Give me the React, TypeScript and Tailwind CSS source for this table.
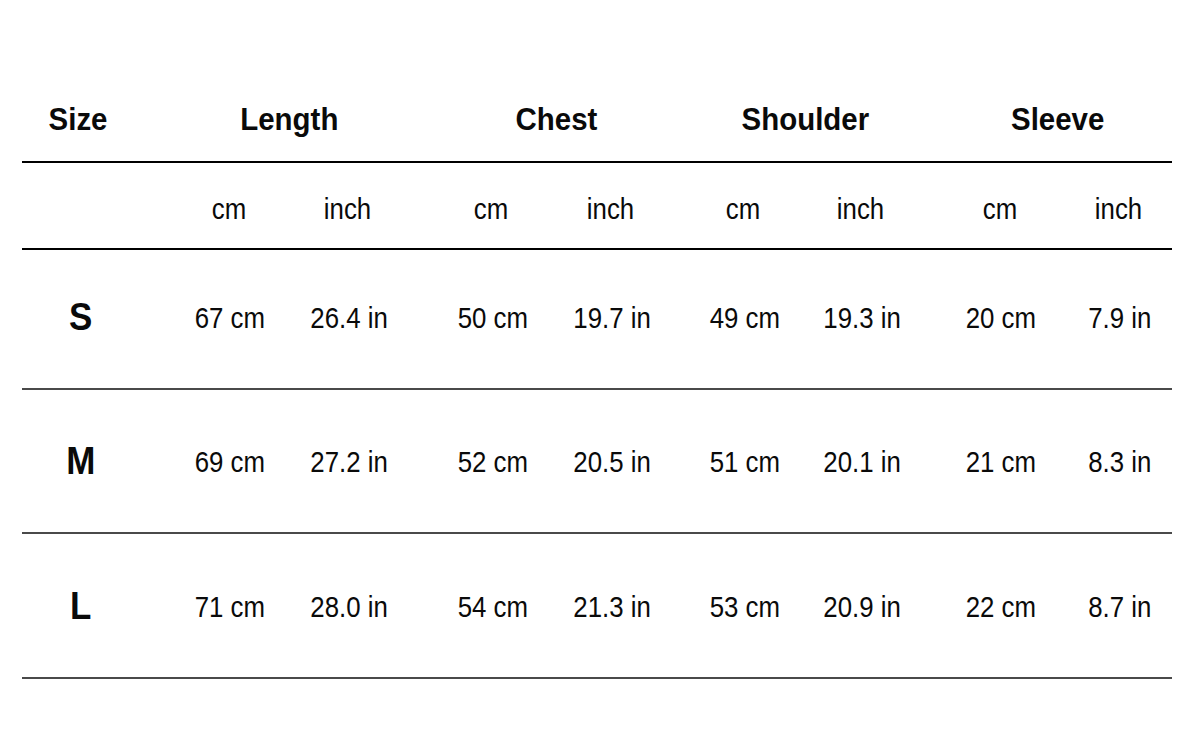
const font = "font-['Liberation_Sans','Arial',sans-serif]"

type Group = { name: string; ml: string; cell: string; shift: string }

const groups: Group[] = [
  { name: 'Length', ml: 'ml-[35px]', cell: 'w-[119px]', shift: 'translate-x-[1px]' },
  { name: 'Chest', ml: 'ml-[24px]', cell: 'w-[120px]', shift: 'translate-x-[5px]' },
  { name: 'Shoulder', ml: 'ml-[13px]', cell: 'w-[118px]', shift: 'translate-x-[3px]' },
  { name: 'Sleeve', ml: 'ml-[20px]', cell: 'w-[119px]', shift: 'translate-x-[-1px]' },
]

const rows = [
  { size: 'S', values: ['67 cm', '26.4 in', '50 cm', '19.7 in', '49 cm', '19.3 in', '20 cm', '7.9 in'], h: 'h-[140px] pb-[4px]' },
  { size: 'M', values: ['69 cm', '27.2 in', '52 cm', '20.5 in', '51 cm', '20.1 in', '21 cm', '8.3 in'], h: 'h-[144px]' },
  { size: 'L', values: ['71 cm', '28.0 in', '54 cm', '21.3 in', '53 cm', '20.9 in', '22 cm', '8.7 in'], h: 'h-[145px] pt-[2px]' },
]

// condensed look: Liberation Sans squeezed horizontally
function Narrow({ children, bold }: { children: string; bold?: boolean }) {
  return (
    <span className={`inline-block whitespace-nowrap ${bold ? 'scale-x-[0.92]' : 'scale-x-[0.86]'}`}>{children}</span>
  )
}

function Cells({ items, data }: { items: string[]; data?: boolean }) {
  return (
    <>
      {groups.map((g, i) => (
        <div key={g.name} className={`flex shrink-0 ${g.ml}`}>
          {items.slice(i * 2, i * 2 + 2).map((t, j) => (
            <div
              key={j}
              className={`${g.cell} shrink-0 flex justify-center text-[30px] ${data ? 'pl-[3px]' : ''}`}
            >
              <Narrow>{t}</Narrow>
            </div>
          ))}
        </div>
      ))}
    </>
  )
}

export default function App() {
  return (
    <div className={`w-[1200px] h-[744px] bg-white text-[#0a0a0a] pt-[77px] pl-[22px] overflow-hidden ${font}`}>
      <div className="w-[1150px]">
        {/* header */}
        <div className="flex items-center h-[86px] border-b-2 border-black">
          <div className="w-[112px] shrink-0 flex justify-center text-[32px] font-bold">
            <Narrow bold>Size</Narrow>
          </div>
          {groups.map((g) => (
            <div key={g.name} className={`${g.ml} flex shrink-0`}>
              <div className={`${g.cell} shrink-0`}></div>
              <div className={`w-0 flex justify-center text-[32px] font-bold ${g.shift}`}>
                <Narrow bold>{g.name}</Narrow>
              </div>
              <div className={`${g.cell} shrink-0`}></div>
            </div>
          ))}
        </div>

        {/* units */}
        <div className="flex items-center h-[87px] border-b-2 border-black pt-[6px]">
          <div className="w-[112px] shrink-0"></div>
          <Cells items={['cm', 'inch', 'cm', 'inch', 'cm', 'inch', 'cm', 'inch']} />
        </div>

        {rows.map((r) => (
          <div key={r.size} className={`flex items-center ${r.h} border-b-2 border-[#4a4a4a]`}>
            <div className="w-[112px] shrink-0 flex justify-center pl-[6px] text-[38px] font-bold">
              <Narrow bold>{r.size}</Narrow>
            </div>
            <Cells items={r.values} data />
          </div>
        ))}
      </div>
    </div>
  )
}
